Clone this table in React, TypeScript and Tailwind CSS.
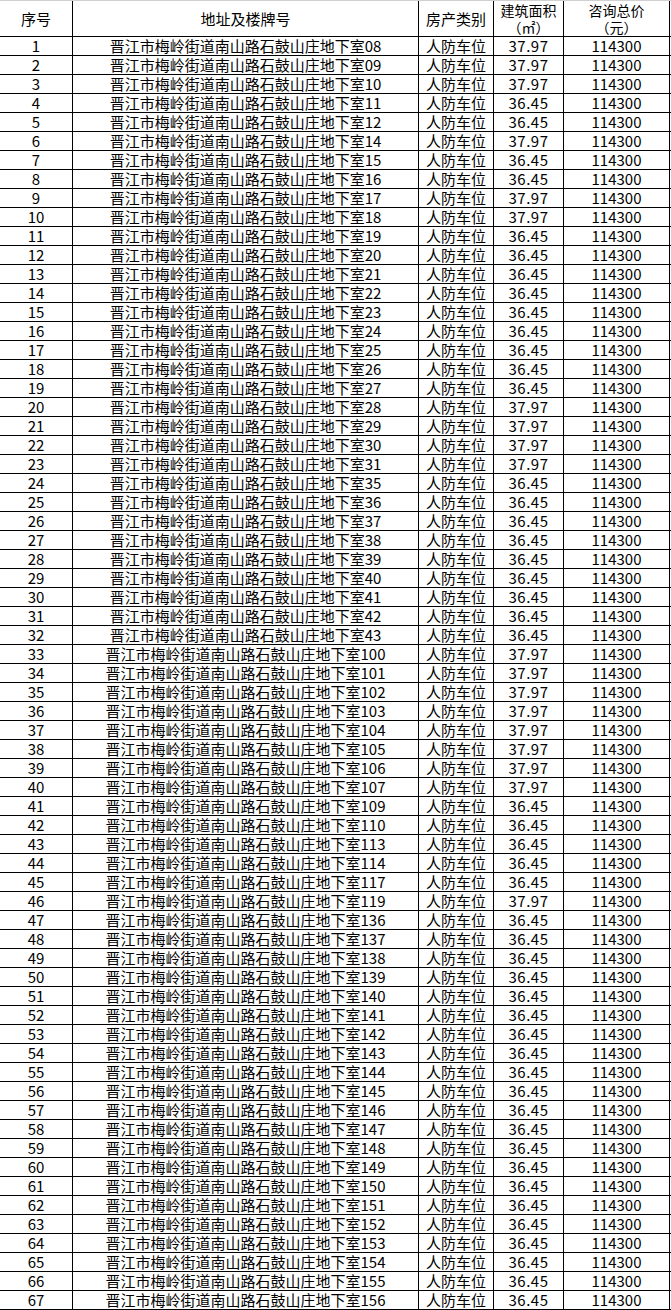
const rows: [string, string][] = [
  ['08', '37.97'], ['09', '37.97'], ['10', '37.97'], ['11', '36.45'], ['12', '36.45'],
  ['14', '37.97'], ['15', '36.45'], ['16', '36.45'], ['17', '37.97'], ['18', '37.97'],
  ['19', '36.45'], ['20', '36.45'], ['21', '36.45'], ['22', '36.45'], ['23', '36.45'],
  ['24', '36.45'], ['25', '36.45'], ['26', '36.45'], ['27', '36.45'], ['28', '37.97'],
  ['29', '37.97'], ['30', '37.97'], ['31', '37.97'], ['35', '36.45'], ['36', '36.45'],
  ['37', '36.45'], ['38', '36.45'], ['39', '36.45'], ['40', '36.45'], ['41', '36.45'],
  ['42', '36.45'], ['43', '36.45'], ['100', '37.97'], ['101', '37.97'], ['102', '37.97'],
  ['103', '37.97'], ['104', '37.97'], ['105', '37.97'], ['106', '37.97'], ['107', '37.97'],
  ['109', '36.45'], ['110', '36.45'], ['113', '36.45'], ['114', '36.45'], ['117', '36.45'],
  ['119', '37.97'], ['136', '36.45'], ['137', '36.45'], ['138', '36.45'], ['139', '36.45'],
  ['140', '36.45'], ['141', '36.45'], ['142', '36.45'], ['143', '36.45'], ['144', '36.45'],
  ['145', '36.45'], ['146', '36.45'], ['147', '36.45'], ['148', '36.45'], ['149', '36.45'],
  ['150', '36.45'], ['151', '36.45'], ['152', '36.45'], ['153', '36.45'], ['154', '36.45'],
  ['155', '36.45'], ['156', '36.45'],
];

const cell = 'flex items-center justify-center border-r border-black';

const App = () => {
  return (
    <div
      className="w-[671px] bg-white text-black text-[15px] leading-[18px]"
      style={{ fontFamily: '"Noto Sans CJK SC", "Noto Sans", sans-serif' }}
    >
      <div className="flex h-[37px] border-t border-b border-t-[#d0d0d0] border-b-black">
        <div className={`${cell} w-[73px]`}>序号</div>
        <div className={`${cell} w-[346px]`}>地址及楼牌号</div>
        <div className={`${cell} w-[75px]`}>房产类别</div>
        <div className={`${cell} w-[70px] flex-col text-[14px] leading-[17px]`}>
          <span>建筑面积</span>
          <span>（㎡）</span>
        </div>
        <div className={`${cell} w-[106px] flex-col text-[14px] leading-[17px]`}>
          <span>咨询总价</span>
          <span>（元）</span>
        </div>
      </div>
      {rows.map(([room, area], i) => (
        <div key={i} className="flex h-[19px] border-b border-black">
          <div className={`${cell} w-[73px]`}>{i + 1}</div>
          <div className={`${cell} w-[346px]`}>晋江市梅岭街道南山路石鼓山庄地下室{room}</div>
          <div className={`${cell} w-[75px]`}>人防车位</div>
          <div className={`${cell} w-[70px] tracking-[0.5px]`}>{area}</div>
          <div className={`${cell} w-[106px]`}>114300</div>
        </div>
      ))}
    </div>
  );
};

export default App;
